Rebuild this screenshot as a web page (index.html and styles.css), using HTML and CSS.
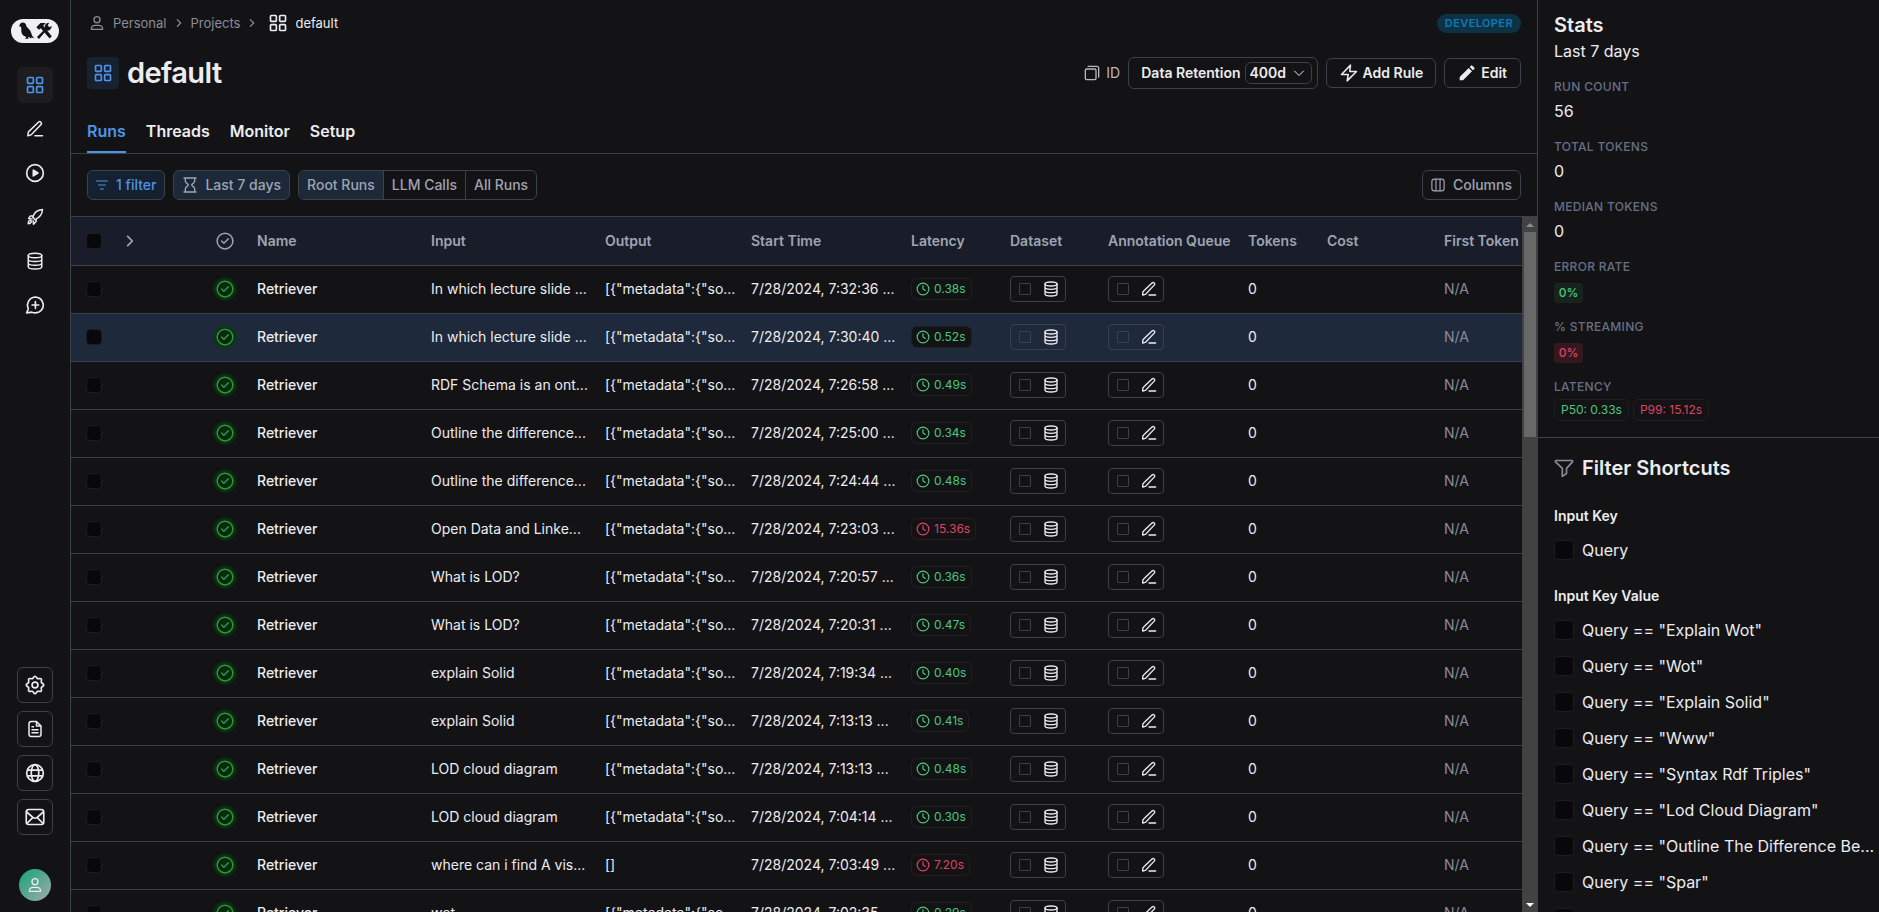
FILE: index.html
```html
<!DOCTYPE html>
<html lang="en">
<head>
  <meta charset="UTF-8">
  <title>default - Projects</title>
  <meta name="viewport" content="width=device-width, initial-scale=1">
  <link rel="stylesheet" href="styles.css">
</head>
<body>
  <!-- Icon sprite -->
  <svg class="sprite" aria-hidden="true">
    <symbol id="i-grid" viewBox="0 0 24 24"><rect x="3" y="3" width="7" height="7" rx="1"/><rect x="14" y="3" width="7" height="7" rx="1"/><rect x="3" y="14" width="7" height="7" rx="1"/><rect x="14" y="14" width="7" height="7" rx="1"/></symbol>
    <symbol id="i-pen" viewBox="0 0 24 24"><path d="M12 21h10M2.500 21l.3-4c.1-.6.3-1.100.8-1.500L16.500 2.900a2.300 2.300 0 0 1 3.300 3.300L7.600 19c-.4.4-.9.7-1.500.9z"/></symbol>
    <symbol id="i-play" viewBox="0 0 24 24"><circle cx="12" cy="12" r="10"/><path d="M10 8.500v7l5.500-3.500z" fill="currentColor"/></symbol>
    <symbol id="i-rocket" viewBox="0 0 24 24"><path d="M9 12c1.500-5 6-9.500 13-10-.5 7-5 11.500-10 13.500zM9 12l3 3.500M9.500 10.500H6L3.500 14 8 14.500M13.500 14.500V18L10 21.500 9.500 17M3 21c0-2.500.5-4 2-4.500s2.500.8 2 2S5.500 21 3 21z"/></symbol>
    <symbol id="i-db" viewBox="0 0 24 24"><ellipse cx="12" cy="4.500" rx="9" ry="3"/><path d="M3 4.500v15c0 1.700 4 3 9 3s9-1.300 9-3v-15M3 9.500c0 1.700 4 3 9 3s9-1.300 9-3M3 14.500c0 1.700 4 3 9 3s9-1.300 9-3"/></symbol>
    <symbol id="i-msg" viewBox="0 0 24 24"><path d="M12.500 21.500a9.500 9.500 0 1 0-8.900-6.200c.3.900.3 1.300.2 1.800L2 21.500c3.500-.3 5-.8 6-.9 1.300.5 2.900.9 4.500.9zM12.500 8v8M8.500 12h8"/></symbol>
    <symbol id="i-gear" viewBox="0 0 24 24"><circle cx="12" cy="12" r="3.500"/><path d="M12 1.500c1.600 0 1.800 2.300 3.200 2.900s3-.9 4.200.2-.4 2.800.2 4.200 2.900 1.600 2.900 3.200-2.300 1.800-2.900 3.200.9 3-.2 4.200-2.800-.4-4.200.2-1.600 2.900-3.200 2.900-1.800-2.300-3.200-2.900-3 .9-4.200-.2.400-2.800-.2-4.200S1.500 13.600 1.500 12s2.300-1.800 2.900-3.200-.9-3 .2-4.200 2.800.4 4.200-.2S10.400 1.500 12 1.500z"/></symbol>
    <symbol id="i-file" viewBox="0 0 24 24"><path d="M14 2H7a3 3 0 0 0-3 3v14a3 3 0 0 0 3 3h10a3 3 0 0 0 3-3V8zM14 2v6h6M8 9h2M8 13h8M8 17h8"/></symbol>
    <symbol id="i-globe" viewBox="0 0 24 24"><circle cx="12" cy="12" r="10"/><ellipse cx="12" cy="12" rx="4.500" ry="10"/><path d="M3.500 8.500h17M3.500 15.500h17"/></symbol>
    <symbol id="i-mail" viewBox="0 0 24 24"><rect x="1.500" y="3" width="21" height="18" rx="3"/><path d="M2 6l7.500 6.500c1.600 1.300 3.400 1.300 5 0L22 6M2.500 19.500l6.500-6.500M21.500 19.500L15 13"/></symbol>
    <symbol id="i-user" viewBox="0 0 24 24"><circle cx="12" cy="7" r="4.500"/><path d="M3.500 21.500c0-4 3-6 6-6h5c3 0 6 2 6 6z"/></symbol>
    <symbol id="i-right" viewBox="0 0 24 24"><path d="M8 4l8 8-8 8"/></symbol>
    <symbol id="i-down" viewBox="0 0 24 24"><path d="M3 8l9 9 9-9"/></symbol>
    <symbol id="i-copy" viewBox="0 0 24 24"><rect x="2" y="6" width="16" height="16" rx="2"/><path d="M6 2h13a3 3 0 0 1 3 3v13"/></symbol>
    <symbol id="i-bolt" viewBox="0 0 24 24"><path d="M14 1.500L2 14h9l-1.500 8.500L22 10h-9z"/></symbol>
    <symbol id="i-edit" viewBox="0 0 24 24"><path fill="currentColor" stroke="none" d="M1 23v-5L14.500 4.500l5 5L6 23zM16 3l2-2a1.500 1.500 0 0 1 2 0l3 3a1.500 1.500 0 0 1 0 2l-2 2z"/></symbol>
    <symbol id="i-lines" viewBox="0 0 24 24"><path d="M1 4h22M5 12h14M9 20h6"/></symbol>
    <symbol id="i-hour" viewBox="0 0 24 24"><path d="M3 1.500h18M3 22.500h18M5 1.500v5c0 2.500 4.500 4 4.500 5.500S5 15 5 17.500v5M19 1.500v5c0 2.500-4.500 4-4.500 5.500s4.500 3 4.500 5.500v5"/></symbol>
    <symbol id="i-cols" viewBox="0 0 24 24"><rect x="1.500" y="2" width="21" height="20" rx="4"/><path d="M8.500 2v20M15.500 2v20"/></symbol>
    <symbol id="i-check" viewBox="0 0 24 24"><circle cx="12" cy="12" r="10.500"/><path d="M7.500 12l3 3 6-6"/></symbol>
    <symbol id="i-clock" viewBox="0 0 24 24"><circle cx="12" cy="12" r="10"/><path d="M12 6v6l4 2.500"/></symbol>
    <symbol id="i-funnel" viewBox="0 0 24 24"><path d="M2.500 3h19c.8 0 1.200 1 .7 1.600L15 12.500v6.200L10 22v-9.500L1.800 4.600C1.300 4 1.700 3 2.500 3z"/></symbol>
  </svg>

  <div class="app">
    <nav class="sidebar">
      <a href="#" class="logo" aria-label="Home">
        <svg viewBox="0 0 48 24">
          <path d="M8.200 7.800c.2-2.600 1.600-4.200 3.500-4.200 2 0 3.100 1.200 3.500 3 .4 1.500 1.300 2.200 2.600 3.400 2 1.900 2.500 4 3 5.800.4 1.300 1.300 2.300 2.600 3.400l-3-.6-.4 1-2-1.600-1 .2.800 1.600H13.500l1.600-1-.3-1c-3.200-1-4.800-3.600-4.500-7 .1-1.200 0-2.200-.5-3.200z"/>
          <path d="M25.300 8.300L29.500 4h5.300l-2.600 2.700 8.600 10.500-2.200 2.300-8.800-10.200-1.800 1.500z"/>
          <path d="M40.600 7a4.300 4.300 0 0 1-5.400 4.500L28 20l-2-2 8-8a4.300 4.300 0 0 1 4.300-6.200l-1.600 2.500 1.600 2z"/>
        </svg>
      </a>
      <div class="nav-list">
        <a href="#" class="nav-item active" aria-label="Projects"><svg class="icon i20"><use href="#i-grid"/></svg></a>
        <a href="#" class="nav-item" aria-label="Annotation queues"><svg class="icon i18"><use href="#i-pen"/></svg></a>
        <a href="#" class="nav-item" aria-label="Playground"><svg class="icon i20"><use href="#i-play"/></svg></a>
        <a href="#" class="nav-item" aria-label="Deployments"><svg class="icon i18"><use href="#i-rocket"/></svg></a>
        <a href="#" class="nav-item" aria-label="Datasets"><svg class="icon i18"><use href="#i-db"/></svg></a>
        <a href="#" class="nav-item" aria-label="Prompts"><svg class="icon i20"><use href="#i-msg"/></svg></a>
      </div>
      <div class="nav-list nav-bottom">
        <a href="#" class="nav-item boxed" aria-label="Settings"><svg class="icon i20"><use href="#i-gear"/></svg></a>
        <a href="#" class="nav-item boxed" aria-label="Docs"><svg class="icon i18"><use href="#i-file"/></svg></a>
        <a href="#" class="nav-item boxed" aria-label="Language"><svg class="icon i20"><use href="#i-globe"/></svg></a>
        <a href="#" class="nav-item boxed" aria-label="Contact"><svg class="icon i20"><use href="#i-mail"/></svg></a>
      </div>
      <button class="avatar" aria-label="Account"><svg class="icon i16"><use href="#i-user"/></svg></button>
    </nav>

    <main class="main">
      <header class="page-header">
        <div class="crumb-row">
          <div class="crumbs">
            <svg class="icon i16 owner"><use href="#i-user"/></svg>
            <a href="#">Personal</a>
            <svg class="icon i10"><use href="#i-right"/></svg>
            <a href="#">Projects</a>
            <svg class="icon i10"><use href="#i-right"/></svg>
            <svg class="icon i20 light"><use href="#i-grid"/></svg>
            <span class="current">default</span>
          </div>
          <span class="plan">DEVELOPER</span>
        </div>
        <div class="title-row">
          <span class="title-icon"><svg class="icon i20"><use href="#i-grid"/></svg></span>
          <h1>default</h1>
          <div class="actions">
            <button class="copy-id"><svg class="icon i16"><use href="#i-copy"/></svg>ID</button>
            <div class="retention">
              <label for="retention">Data Retention</label>
              <span class="select-wrap">
                <select id="retention"><option>400d</option><option>14d</option></select>
                <svg class="icon i12"><use href="#i-down"/></svg>
              </span>
            </div>
            <button class="btn"><svg class="icon i18"><use href="#i-bolt"/></svg>Add Rule</button>
            <button class="btn btn-edit"><svg class="icon i16"><use href="#i-edit"/></svg>Edit</button>
          </div>
        </div>
        <div class="tabs">
          <a href="#" class="tab active">Runs</a>
          <a href="#" class="tab">Threads</a>
          <a href="#" class="tab">Monitor</a>
          <a href="#" class="tab">Setup</a>
        </div>
      </header>

      <div class="toolbar">
        <button class="tool filter"><svg class="icon i12"><use href="#i-lines"/></svg>1 filter</button>
        <button class="tool range"><svg class="icon i16"><use href="#i-hour"/></svg>Last 7 days</button>
        <div class="segments">
          <button class="active">Root Runs</button>
          <button>LLM Calls</button>
          <button>All Runs</button>
        </div>
        <button class="tool columns"><svg class="icon i14"><use href="#i-cols"/></svg>Columns</button>
      </div>

      <div class="table-area">
        <div class="table-scroll">
          <table class="runs">
            <colgroup>
              <col class="c-select"><col class="c-expand"><col class="c-status"><col class="c-name">
              <col class="c-input"><col class="c-output"><col class="c-start"><col class="c-latency">
              <col class="c-dataset"><col class="c-queue"><col class="c-tokens"><col class="c-cost"><col>
            </colgroup>
            <thead>
              <tr>
                <th class="select"><input type="checkbox" class="check" aria-label="Select all runs"></th>
                <th><svg class="icon i14 expand"><use href="#i-right"/></svg></th>
                <th class="status"><svg class="icon i18"><use href="#i-check"/></svg></th>
                <th>Name</th>
                <th>Input</th>
                <th>Output</th>
                <th>Start Time</th>
                <th>Latency</th>
                <th>Dataset</th>
                <th>Annotation Queue</th>
                <th>Tokens</th>
                <th>Cost</th>
                <th>First Token</th>
              </tr>
            </thead>
            <tbody id="runs-body"></tbody>
          </table>
        </div>
        <div class="scrollbar">
          <span class="arrow up"></span>
          <span class="thumb"></span>
          <span class="arrow down"></span>
        </div>
      </div>
    </main>

    <aside class="panel">
      <section class="stats">
        <h2>Stats</h2>
        <p class="period">Last 7 days</p>
        <dl>
          <dt>RUN COUNT</dt><dd>56</dd>
          <dt>TOTAL TOKENS</dt><dd>0</dd>
          <dt>MEDIAN TOKENS</dt><dd>0</dd>
          <dt>ERROR RATE</dt><dd class="rate"><span class="badge green">0%</span></dd>
          <dt>% STREAMING</dt><dd class="rate"><span class="badge red">0%</span></dd>
          <dt>LATENCY</dt><dd class="last"><span class="chip">P50: 0.33s</span><span class="chip slow">P99: 15.12s</span></dd>
        </dl>
      </section>
      <section class="shortcuts">
        <h2><svg class="icon i20"><use href="#i-funnel"/></svg>Filter Shortcuts</h2>
        <h3>Input Key</h3>
        <label class="shortcut"><input type="checkbox" class="check"><span>Query</span></label>
        <h3>Input Key Value</h3>
        <label class="shortcut"><input type="checkbox" class="check"><span>Query == "Explain Wot"</span></label>
        <label class="shortcut"><input type="checkbox" class="check"><span>Query == "Wot"</span></label>
        <label class="shortcut"><input type="checkbox" class="check"><span>Query == "Explain Solid"</span></label>
        <label class="shortcut"><input type="checkbox" class="check"><span>Query == "Www"</span></label>
        <label class="shortcut"><input type="checkbox" class="check"><span>Query == "Syntax Rdf Triples"</span></label>
        <label class="shortcut"><input type="checkbox" class="check"><span>Query == "Lod Cloud Diagram"</span></label>
        <label class="shortcut"><input type="checkbox" class="check"><span>Query == "Outline The Difference Be...</span></label>
        <label class="shortcut"><input type="checkbox" class="check"><span>Query == "Spar"</span></label>
        <label class="shortcut"><input type="checkbox" class="check" aria-label="More"></label>
      </section>
    </aside>
  </div>

  <script src="script.js"></script>
</body>
</html>
```

FILE: styles.css
```css
* {
  box-sizing: border-box;
}
body {
  margin: 0;
  background: #131316;
  color: #ececef;
  font-family: Inter, sans-serif;
  font-size: 14px;
  line-height: 20px;
}
a {
  color: inherit;
  text-decoration: none;
}
button, select {
  font: inherit;
  color: inherit;
  background: none;
  border: 0;
  padding: 0;
  cursor: pointer;
}
h1, h2, h3, p, dl, dd {
  margin: 0;
}
.sprite {
  display: none;
}
.icon {
  display: block;
  flex: none;
  fill: none;
  stroke: currentColor;
  stroke-width: 2;
  stroke-linecap: round;
  stroke-linejoin: round;
}
.i10 { width: 10px; height: 10px; stroke-width: 3; }
.i12 { width: 12px; height: 12px; }
.i14 { width: 14px; height: 14px; }
.i16 { width: 16px; height: 16px; }
.i18 { width: 18px; height: 18px; }
.i20 { width: 20px; height: 20px; }

.app {
  display: flex;
  height: 100vh;
  overflow: hidden;
}

/* Sidebar */
.sidebar {
  flex: none;
  width: 71px;
  border-right: 1px solid #38414c;
  display: flex;
  flex-direction: column;
  align-items: center;
  padding: 19px 0 11px;
}
.logo {
  width: 48px;
  height: 24px;
  border-radius: 12px;
  background: #f0f0f3;
  margin-bottom: 24px;
}
.logo svg {
  display: block;
  fill: #131316;
}
.nav-list {
  display: flex;
  flex-direction: column;
  gap: 8px;
}
.nav-item {
  width: 36px;
  height: 36px;
  border-radius: 6px;
  display: flex;
  align-items: center;
  justify-content: center;
}
.nav-item.active {
  background: #1d1d21;
  color: #4f93e6;
}
.nav-item.boxed {
  border: 1px solid #38414c;
}
.nav-bottom {
  margin-top: auto;
}
.avatar {
  width: 32px;
  height: 32px;
  margin-top: 34px;
  border-radius: 50%;
  background: linear-gradient(135deg, #2fa583 20%, #95aaa3 90%);
  display: flex;
  align-items: center;
  justify-content: center;
}

/* Header */
.main {
  flex: 1;
  min-width: 0;
  display: flex;
  flex-direction: column;
}
.page-header {
  padding: 12px 16px 0;
  border-bottom: 1px solid #38414c;
}
.crumb-row {
  display: flex;
  align-items: center;
  justify-content: space-between;
  height: 22px;
}
.crumbs {
  display: flex;
  align-items: center;
  gap: 7px;
  padding-left: 2px;
  font-size: 13px;
  color: #8b8c97;
}
.crumbs .owner {
  margin-right: 1px;
}
.crumbs .light {
  margin-left: 4px;
  color: #ececef;
}
.crumbs .current {
  color: #ececef;
}
.plan {
  padding: 0 8px;
  border-radius: 10px;
  background: #0d3244;
  color: #0b7ab8;
  font-size: 11px;
  font-weight: 600;
  line-height: 19px;
  letter-spacing: 0.4px;
}
.title-row {
  display: flex;
  align-items: center;
  margin-top: 23px;
}
.title-icon {
  width: 32px;
  height: 32px;
  border-radius: 4px;
  background: #172130;
  color: #4f93e6;
  display: flex;
  align-items: center;
  justify-content: center;
}
h1 {
  margin-left: 8px;
  font-size: 29px;
  line-height: 32px;
  font-weight: 600;
  letter-spacing: -0.02em;
}
.actions {
  margin-left: auto;
  display: flex;
  align-items: center;
  gap: 8px;
}
.copy-id {
  display: flex;
  align-items: center;
  gap: 6px;
  color: #b6b7c0;
}
.retention {
  display: flex;
  align-items: center;
  gap: 4px;
  height: 32px;
  padding: 0 5px 0 12px;
  border: 1px solid #38414c;
  border-radius: 6px;
  font-weight: 600;
}
.select-wrap {
  display: flex;
  align-items: center;
  border: 1px solid #38414c;
  border-radius: 6px;
  padding: 0 6px 0 4px;
}
.select-wrap select {
  appearance: none;
  width: 43px;
  height: 20px;
}
.btn {
  display: flex;
  align-items: center;
  gap: 5px;
  height: 30px;
  padding: 0 12px 0 13px;
  border: 1px solid #38414c;
  border-radius: 6px;
  font-weight: 600;
}
.btn-edit {
  gap: 6px;
  padding: 0 13px 0 14px;
}
.tabs {
  display: flex;
  gap: 20px;
  margin-top: 29px;
}
.tab {
  padding-bottom: 7px;
  border-bottom: 2px solid transparent;
  font-size: 16px;
  line-height: 26px;
  font-weight: 600;
}
.tab.active {
  color: #4f93e6;
  border-color: #4f93e6;
}

/* Toolbar */
.toolbar {
  display: flex;
  gap: 8px;
  padding: 16px;
  color: #9ea4b3;
  font-weight: 500;
}
.tool {
  display: flex;
  align-items: center;
  gap: 7px;
  height: 30px;
  padding: 0 8px;
  border: 1px solid #38414c;
  border-radius: 6px;
}
.tool.filter {
  gap: 8px;
  background: #152030;
  color: #4f93e6;
}
.tool.range {
  background: #1d2939;
}
.tool.columns {
  gap: 8px;
  margin-left: auto;
}
.segments {
  display: flex;
  border: 1px solid #38414c;
  border-radius: 6px;
  overflow: hidden;
}
.segments button {
  height: 28px;
  padding: 0 8px;
}
.segments button + button {
  border-left: 1px solid #38414c;
}
.segments .active {
  background: #1d2939;
}

/* Runs table */
.table-area {
  flex: 1;
  min-height: 0;
  display: flex;
  border-top: 1px solid #38414c;
}
.table-scroll {
  flex: 1;
  min-width: 0;
  overflow: hidden;
}
.runs {
  width: 100%;
  table-layout: fixed;
  border-collapse: separate;
  border-spacing: 0;
}
.c-select { width: 46px; }
.c-expand { width: 84px; }
.c-status { width: 48px; }
.c-name { width: 174px; }
.c-input { width: 174px; }
.c-output { width: 146px; }
.c-start { width: 160px; }
.c-latency { width: 99px; }
.c-dataset { width: 98px; }
.c-queue { width: 140px; }
.c-tokens { width: 79px; }
.c-cost { width: 117px; }
.runs th, .runs td {
  height: 48px;
  padding: 0 4px 0 8px;
  border-bottom: 1px solid #38414c;
  text-align: left;
  white-space: nowrap;
  overflow: hidden;
  text-overflow: ellipsis;
}
.runs td {
  padding-bottom: 2px;
}
.runs th {
  height: 49px;
  background: #191d29;
  color: #9ea4b3;
  font-weight: 600;
  text-overflow: clip;
}
.runs .select {
  padding-left: 15px;
}
.runs .status {
  padding-left: 15px;
}
.runs .expand {
  margin-left: -2px;
  stroke-width: 3;
}
.runs td.status {
  color: #389447;
}
.runs td.status .icon {
  border-radius: 50%;
  background: #052b0a;
  box-shadow: 0 0 3px 2px #063d0c;
}
.runs .name {
  font-weight: 500;
}
.runs .muted {
  color: #8b8c97;
}
.runs .hover td {
  background: #1e293b;
}
.check {
  appearance: none;
  display: block;
  flex: none;
  width: 16px;
  height: 16px;
  margin: 0;
  border: 1px solid #1d1d23;
  border-radius: 4px;
  background: #08080c;
}
.chip {
  display: inline-flex;
  align-items: center;
  gap: 4px;
  height: 22px;
  padding: 0 5px 0 4px;
  border: 1px solid #1c2024;
  border-radius: 6px;
  background: #131316;
  color: #4cc77c;
  font-size: 12px;
  vertical-align: middle;
}
.chip.slow {
  color: #df4360;
  border-color: #2a1a20;
}
.add-box {
  display: flex;
  align-items: center;
  gap: 12px;
  width: 56px;
  height: 26px;
  padding: 0 8px;
  border: 1px solid #38414c;
  border-radius: 4px;
}
.add-box .check {
  width: 12px;
  height: 12px;
  border-color: #38414c;
  border-radius: 1px;
  background: none;
}

/* Scrollbar */
.scrollbar {
  flex: none;
  width: 15px;
  background: #424242;
  display: flex;
  flex-direction: column;
  align-items: center;
}
.scrollbar .thumb {
  width: 12px;
  height: 205px;
  background: #686868;
}
.arrow {
  width: 15px;
  height: 15px;
  display: flex;
  align-items: center;
  justify-content: center;
}
.arrow::before {
  content: "";
  border: 4px solid transparent;
}
.arrow.up::before {
  border-bottom-color: #8c8c8c;
  border-top: 0;
}
.arrow.down {
  margin-top: auto;
}
.arrow.down::before {
  border-top-color: #ffffff;
  border-bottom: 0;
}

/* Right panel */
.panel {
  flex: none;
  width: 342px;
  border-left: 1px solid #38414c;
}
.panel h2 {
  font-size: 20px;
  line-height: 26px;
  font-weight: 600;
}
.stats {
  padding: 12px 16px 15px;
  border-bottom: 1px solid #38414c;
}
.period {
  font-size: 16px;
  line-height: 26px;
}
.stats dl {
  padding-top: 1px;
}
.stats dt {
  margin-top: 12px;
  font-size: 12px;
  font-weight: 500;
  letter-spacing: 0.3px;
  line-height: 20px;
  color: #667085;
}
.stats dd {
  height: 28px;
  font-size: 16px;
  line-height: 28px;
}
.stats dd.rate {
  padding-top: 6px;
}
.stats dd.last {
  display: flex;
  gap: 4px;
  height: 25px;
  padding-top: 2px;
}
.stats .chip {
  padding: 0 6px;
}
.badge {
  display: block;
  width: 29px;
  font-size: 12px;
  line-height: 20px;
  font-weight: 500;
  text-align: center;
  border-radius: 3px;
}
.badge.green {
  background: #16241d;
  color: #4cc77c;
}
.badge.red {
  background: #34181f;
  color: #df4360;
}
.shortcuts {
  padding: 17px 4px 0 16px;
}
.shortcuts h2 {
  display: flex;
  align-items: center;
  gap: 8px;
}
.shortcuts h2 .icon {
  color: #8b8c97;
}
.shortcuts h3 {
  margin: 24px 0 5px;
  font-size: 14px;
  line-height: 22px;
  font-weight: 600;
}
.shortcut {
  display: flex;
  align-items: center;
  gap: 8px;
  height: 36px;
  font-size: 16px;
}
.shortcut span {
  overflow: hidden;
  text-overflow: ellipsis;
  white-space: nowrap;
}
.shortcut .check {
  width: 20px;
  height: 20px;
}
.shortcuts .shortcut + h3 {
  margin-top: 17px;
}
```

FILE: script.js
```js
const docs = '[{"metadata":{"so...';

const runs = [
  { input: "In which lecture slide ...", output: docs, time: "7:32:36 ...", latency: "0.38s" },
  { input: "In which lecture slide ...", output: docs, time: "7:30:40 ...", latency: "0.52s", hover: true },
  { input: "RDF Schema is an ont...", output: docs, time: "7:26:58 ...", latency: "0.49s" },
  { input: "Outline the difference...", output: docs, time: "7:25:00 ...", latency: "0.34s" },
  { input: "Outline the difference...", output: docs, time: "7:24:44 ...", latency: "0.48s" },
  { input: "Open Data and Linke...", output: docs, time: "7:23:03 ...", latency: "15.36s", slow: true },
  { input: "What is LOD?", output: docs, time: "7:20:57 ...", latency: "0.36s" },
  { input: "What is LOD?", output: docs, time: "7:20:31 ...", latency: "0.47s" },
  { input: "explain Solid", output: docs, time: "7:19:34 ...", latency: "0.40s" },
  { input: "explain Solid", output: docs, time: "7:13:13 ...", latency: "0.41s" },
  { input: "LOD cloud diagram", output: docs, time: "7:13:13 ...", latency: "0.48s" },
  { input: "LOD cloud diagram", output: docs, time: "7:04:14 ...", latency: "0.30s" },
  { input: "where can i find A vis...", output: "[]", time: "7:03:49 ...", latency: "7.20s", slow: true },
  { input: "wot", output: docs, time: "7:02:35 ...", latency: "0.29s" }
];

document.getElementById("runs-body").innerHTML = runs.map(run => `
  <tr class="${run.hover ? "hover" : ""}">
    <td class="select"><input type="checkbox" class="check" aria-label="Select run"></td>
    <td></td>
    <td class="status"><svg class="icon i18"><use href="#i-check"/></svg></td>
    <td class="name">Retriever</td>
    <td>${run.input}</td>
    <td>${run.output}</td>
    <td>7/28/2024, ${run.time}</td>
    <td><span class="chip ${run.slow ? "slow" : ""}"><svg class="icon i14"><use href="#i-clock"/></svg>${run.latency}</span></td>
    <td><div class="add-box"><input type="checkbox" class="check" aria-label="In dataset"><svg class="icon i16"><use href="#i-db"/></svg></div></td>
    <td><div class="add-box"><input type="checkbox" class="check" aria-label="In queue"><svg class="icon i16"><use href="#i-pen"/></svg></div></td>
    <td>0</td>
    <td></td>
    <td class="muted">N/A</td>
  </tr>
`).join("");
```
